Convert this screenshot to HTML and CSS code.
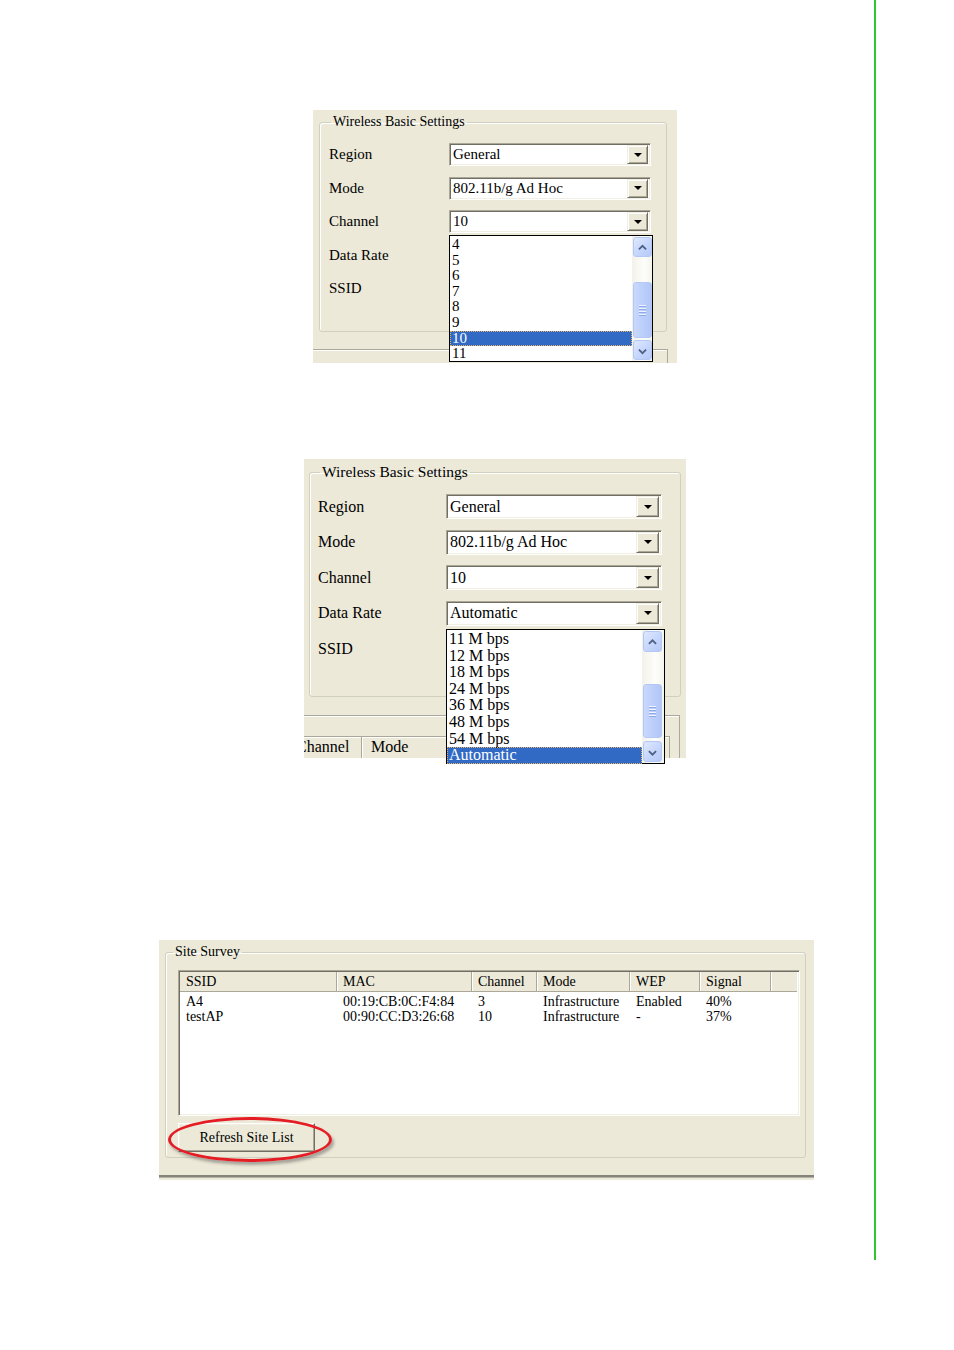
FILE: index.html
```html
<!DOCTYPE html>
<html lang="en">
<head>
<meta charset="utf-8">
<title>Wireless Settings</title>
<link rel="stylesheet" href="styles.css">
</head>
<body>
<div class="column">

  <figure class="shot shot1">
    <fieldset class="gb">
      <legend>Wireless Basic Settings</legend>
      <div class="form">
        <span class="lbl">Region</span>
        <div class="combo"><span class="val">General</span><span class="drop"><i class="tri"></i></span></div>
        <span class="lbl">Mode</span>
        <div class="combo"><span class="val">802.11b/g Ad Hoc</span><span class="drop"><i class="tri"></i></span></div>
        <span class="lbl">Channel</span>
        <div class="combo"><span class="val">10</span><span class="drop"><i class="tri"></i></span></div>
        <span class="lbl">Data Rate</span>
        <span></span>
        <span class="lbl">SSID</span>
        <span></span>
      </div>
    </fieldset>
    <div class="panel"></div>
    <div class="dd">
      <ul class="dd-items">
        <li>4</li><li>5</li><li>6</li><li>7</li><li>8</li><li>9</li><li class="sel">10</li><li>11</li>
      </ul>
      <div class="sb">
        <div class="sb-btn"><svg viewBox="0 0 19 20" width="19" height="20"><polyline points="5.5,11.5 9.5,7.5 13.5,11.5" fill="none" stroke="#4d6185" stroke-width="2"/></svg></div>
        <div class="sb-track"><div class="sb-thumb"><i></i><i></i><i></i><i></i></div></div>
        <div class="sb-btn"><svg viewBox="0 0 19 20" width="19" height="20"><polyline points="5.5,8.5 9.5,12.5 13.5,8.5" fill="none" stroke="#4d6185" stroke-width="2"/></svg></div>
      </div>
    </div>
  </figure>

  <figure class="shot shot2">
    <fieldset class="gb">
      <legend>Wireless Basic Settings</legend>
      <div class="form">
        <span class="lbl">Region</span>
        <div class="combo"><span class="val">General</span><span class="drop"><i class="tri"></i></span></div>
        <span class="lbl">Mode</span>
        <div class="combo"><span class="val">802.11b/g Ad Hoc</span><span class="drop"><i class="tri"></i></span></div>
        <span class="lbl">Channel</span>
        <div class="combo"><span class="val">10</span><span class="drop"><i class="tri"></i></span></div>
        <span class="lbl">Data Rate</span>
        <div class="combo"><span class="val">Automatic</span><span class="drop"><i class="tri"></i></span></div>
        <span class="lbl">SSID</span>
        <span></span>
      </div>
    </fieldset>
    <div class="panel">
      <div class="lvh">
        <span class="hc hc-ch">Channel</span>
        <span class="hc hc-mode">Mode</span>
      </div>
    </div>
    <div class="dd">
      <ul class="dd-items">
        <li>11 M bps</li><li>12 M bps</li><li>18 M bps</li><li>24 M bps</li><li>36 M bps</li><li>48 M bps</li><li>54 M bps</li><li class="sel">Automatic</li>
      </ul>
      <div class="sb">
        <div class="sb-btn"><svg viewBox="0 0 19 21" width="19" height="21"><polyline points="5.5,12 9.5,8 13.5,12" fill="none" stroke="#4d6185" stroke-width="2"/></svg></div>
        <div class="sb-track"><div class="sb-thumb"><i></i><i></i><i></i><i></i></div></div>
        <div class="sb-btn"><svg viewBox="0 0 19 21" width="19" height="21"><polyline points="5.5,9 9.5,13 13.5,9" fill="none" stroke="#4d6185" stroke-width="2"/></svg></div>
      </div>
    </div>
  </figure>

  <figure class="shot shot3">
    <fieldset class="gb">
      <legend>Site Survey</legend>
      <div class="lv">
        <div class="lv-head">
          <span class="hc c1">SSID</span>
          <span class="hc c2">MAC</span>
          <span class="hc c3">Channel</span>
          <span class="hc c4">Mode</span>
          <span class="hc c5">WEP</span>
          <span class="hc c6">Signal</span>
          <span class="hc cfill"></span>
        </div>
        <div class="lv-body">
          <div class="lv-row"><span class="c1">A4</span><span class="c2">00:19:CB:0C:F4:84</span><span class="c3">3</span><span class="c4">Infrastructure</span><span class="c5">Enabled</span><span class="c6">40%</span></div>
          <div class="lv-row"><span class="c1">testAP</span><span class="c2">00:90:CC:D3:26:68</span><span class="c3">10</span><span class="c4">Infrastructure</span><span class="c5">-</span><span class="c6">37%</span></div>
        </div>
      </div>
      <div class="btn-wrap">
        <button class="btn" type="button">Refresh Site List</button>
        <span class="ring"></span>
      </div>
    </fieldset>
    <div class="panel panel3"></div>
  </figure>

</div>
</body>
</html>
```
FILE: styles.css
```css
* { box-sizing: border-box; }

html, body { margin: 0; padding: 0; background: #ffffff; }

body {
  font-family: "Liberation Serif", "Times New Roman", serif;
  color: #000;
}

.column {
  width: 876px;
  height: 1260px;
  padding-top: 110px;
  border-right: 2px solid #2fc62f;
}

.shot {
  margin: 0;
  position: relative;
  display: flow-root;
  background: #ece9d8;
}

/* ---------- group boxes ---------- */
.gb {
  margin: 0;
  padding: 0;
  min-width: 0;
  border: 1px solid #d0d0bf;
  border-radius: 3px;
  box-shadow: inset 1px 1px 0 #fff;
}

.gb legend {
  padding: 0 2px;
  font-size: 14px;
  line-height: 16px;
  white-space: nowrap;
}

.form {
  display: grid;
  align-items: center;
}

.lbl { white-space: nowrap; }

/* ---------- combo boxes ---------- */
.combo {
  display: flex;
  align-items: center;
  background: #fff;
  border: 1px solid;
  border-color: #aca899 #fff #fff #aca899;
  box-shadow: inset 1px 1px 0 #716f64, inset -1px -1px 0 #f1efe2;
  padding: 2px 2px 2px 3px;
}

.combo .val {
  flex: 1;
  white-space: nowrap;
  overflow: hidden;
}

.drop {
  display: flex;
  align-items: center;
  justify-content: center;
  background: #ece9d8;
  border: 1px solid;
  border-color: #f1efe2 #716f64 #716f64 #f1efe2;
  box-shadow: inset 1px 1px 0 #fff, inset -1px -1px 0 #aca899;
}

.tri {
  display: block;
  width: 0;
  height: 0;
  border-style: solid;
  border-width: 4px 4px 0 4px;
  border-color: #000 transparent transparent transparent;
}

/* ---------- dropdown lists ---------- */
.dd {
  position: absolute;
  display: flex;
  background: #fff;
  border: 1px solid #000;
}

.dd-items {
  flex: 1;
  list-style: none;
  margin: 0;
  padding: 0;
}

.dd-items li {
  padding-left: 2px;
  white-space: nowrap;
}

.dd-items li.sel {
  background: #316ac5;
  color: #fff;
  outline: 1px dotted #e4b060;
  outline-offset: -1px;
}

.sb {
  display: flex;
  flex-direction: column;
  padding: 1px 0 1px 1px;
  background: linear-gradient(to right, #f3f1ea, #fdfdfa 60%, #f5f4ee);
}

.sb-btn {
  border: 1px solid #b4c8f6;
  border-radius: 3px;
  background: linear-gradient(135deg, #dfe8fe, #c3d4fc 60%, #b6c9f7);
  display: flex;
}

.sb-btn svg { display: block; }

.sb-track { flex: 1; }

.sb-thumb {
  border: 1px solid #b4c8f6;
  border-radius: 3px;
  background: linear-gradient(to right, #c9d8fd, #bccffb 50%, #b2c6f6);
  display: flex;
  flex-direction: column;
  align-items: center;
  justify-content: center;
  gap: 1px;
}

.sb-thumb i {
  display: block;
  width: 7px;
  height: 1px;
  background: #eef3ff;
  box-shadow: 0 1px 0 #8faae9;
  margin-bottom: 1px;
}

/* ---------- panels ---------- */
.panel {
  border-top: 1px solid #aca899;
  border-right: 1px solid #aca899;
  box-shadow: inset 0 1px 0 #fff;
}

/* ---------- listview header ---------- */
.lvh, .lv-head {
  display: flex;
  background: #ece9d8;
}

.hc {
  white-space: nowrap;
  overflow: hidden;
  border-right: 1px solid #aca899;
  box-shadow: 1px 0 0 #fff;
}

/* ================= SHOT 1 ================= */
.shot1 {
  width: 364px;
  height: 253px;
  margin-left: 313px;
  overflow: hidden;
}

.shot1 .gb {
  margin: 4px 10px 0 6px;
  height: 218px;
}

.shot1 .gb legend { margin-left: 11px; }

.shot1 .form {
  padding: 8px 0 0 9px;
  grid-template-columns: 120px 202px;
  grid-auto-rows: 33.5px;
  font-size: 15px;
}

.shot1 .combo {
  height: 23px;
  font-size: 15px;
}

.shot1 .drop {
  width: 21px;
  height: 19px;
}

.shot1 .panel {
  margin-top: 17px;
  width: 355px;
  height: 20px;
}

.shot1 .dd {
  left: 136px;
  top: 125px;
  width: 204px;
  height: 127px;
}

.shot1 .dd-items {
  font-size: 15px;
  line-height: 15.6px;
  padding-top: 1px;
}

.shot1 .sb { width: 20px; }
.shot1 .sb-btn { height: 20px; }
.shot1 .sb-thumb { margin-top: 25px; height: 56px; }

/* ================= SHOT 2 ================= */
.shot2 {
  width: 382px;
  height: 299px;
  margin-left: 304px;
  margin-top: 96px;
}

.shot2 .gb {
  margin: 4px 5px 0 5px;
  height: 234px;
}

.shot2 .gb legend {
  margin-left: 10px;
  font-size: 15.5px;
  line-height: 18px;
}

.shot2 .form {
  padding: 8px 0 0 8px;
  grid-template-columns: 128px 216px;
  grid-auto-rows: 35.5px;
  font-size: 16px;
}

.shot2 .combo {
  height: 25px;
  font-size: 16px;
}

.shot2 .drop {
  width: 23px;
  height: 21px;
}

.shot2 .panel {
  margin-top: 18px;
  width: 376px;
  height: 43px;
  padding-top: 20px;
  overflow: hidden;
}

.shot2 .lvh {
  margin-left: -16px;
  width: 382px;
  height: 22px;
  font-size: 16px;
  line-height: 20px;
  border-top: 1px solid #aca899;
  border-right: 1px solid #aca899;
  box-shadow: inset 0 1px 0 #fff;
}

.hc-ch { width: 74px; padding-left: 8px; }
.hc-mode { flex: 1; padding-left: 9px; border-right: none; box-shadow: none; }

.shot2 .dd {
  left: 142px;
  top: 170px;
  width: 219px;
  height: 135px;
  z-index: 2;
}

.shot2 .dd-items {
  font-size: 16px;
  line-height: 16.6px;
  padding-top: 1px;
}

.shot2 .sb { width: 22px; padding-right: 2px; }
.shot2 .sb-btn { height: 21px; }
.shot2 .sb-thumb { margin-top: 32px; height: 54px; }

/* ================= SHOT 3 ================= */
.shot3 {
  width: 655px;
  height: 240px;
  margin-left: 159px;
  margin-top: 182px;
  overflow: hidden;
}

.shot3 .gb {
  margin: 4px 8px 0 6px;
  height: 214px;
  padding: 10px 0 0 0;
}

.shot3 .gb legend { margin-left: 7px; }

.lv {
  width: 622px;
  height: 146px;
  margin-left: 12px;
  background: #fff;
  border: 1px solid;
  border-color: #aca899 #fff #fff #aca899;
  box-shadow: inset 1px 1px 0 #716f64, inset -1px -1px 0 #f1efe2;
  padding: 1px 2px 1px 1px;
  font-size: 14px;
}

.lv-head {
  height: 20px;
  line-height: 20px;
  border-bottom: 1px solid #aca899;
}

.lv-head .hc { padding-left: 6px; }

.c1 { width: 157px; }
.c2 { width: 135px; }
.c3 { width: 65px; }
.c4 { width: 93px; }
.c5 { width: 70px; }
.c6 { width: 71px; }
.cfill { flex: 1; border-right: none; box-shadow: none; }

.lv-body { padding-top: 2px; }

.lv-row {
  display: flex;
  line-height: 15px;
  height: 15px;
  white-space: nowrap;
}

.lv-row span { padding-left: 6px; overflow: hidden; }

.btn-wrap {
  position: relative;
  width: 137px;
  height: 29px;
  margin: 7px 0 0 12px;
}

.btn {
  display: block;
  width: 137px;
  height: 29px;
  margin: 0;
  padding: 0;
  background: #ece9d8;
  font-family: "Liberation Serif", "Times New Roman", serif;
  font-size: 14px;
  color: #000;
  border: 1px solid;
  border-color: #fff #716f64 #716f64 #fff;
  box-shadow: inset -1px -1px 0 #aca899, inset 1px 1px 0 #f1efe2;
}

.ring {
  position: absolute;
  left: -10px;
  top: -6px;
  width: 164px;
  height: 45px;
  border: 3px solid #e41c24;
  border-radius: 50%;
  box-shadow: 2px 3px 3px rgba(80, 80, 80, 0.45);
  pointer-events: none;
}

.panel3 {
  margin-top: 17px;
  width: 655px;
  height: 10px;
  border-top: 2px solid #85847a;
  border-right: none;
  box-shadow: inset 0 1px 0 #b4b2a6;
}
```
